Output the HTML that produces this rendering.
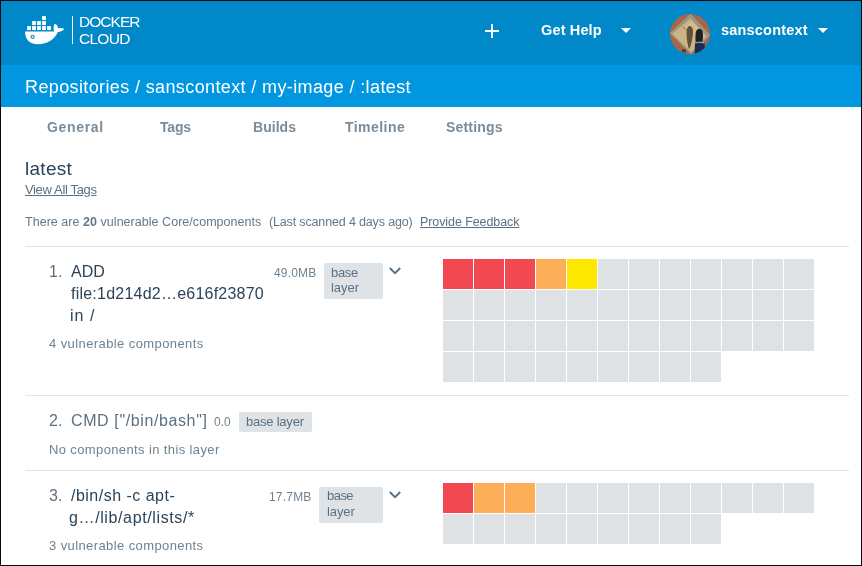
<!DOCTYPE html>
<html><head><meta charset="utf-8">
<style>
html,body{margin:0;padding:0;}
body{width:862px;height:566px;overflow:hidden;position:relative;background:#fff;font-family:"Liberation Sans",sans-serif;}
.frame{position:absolute;left:0;top:0;width:862px;height:566px;box-sizing:border-box;border:1px solid #0a0a0a;pointer-events:none;z-index:10;}
.hdr{position:absolute;left:0;top:0;width:862px;height:65px;background:#0088c8;}
.hdrline{position:absolute;left:0;top:64px;width:862px;height:1px;background:#0082c0;}
.crumb{position:absolute;left:0;top:65px;width:862px;height:42px;background:#0096e0;}
.t{position:absolute;white-space:nowrap;will-change:transform;}
.t b{font-weight:700;}
.hr{position:absolute;left:25px;width:824px;height:1px;background:#e1e3e5;}
.c{position:absolute;width:30px;height:30px;}
.badge{position:absolute;background:#dfe3e6;border-radius:2px;}
svg{position:absolute;left:0;top:0;}
</style></head><body>
<div class="hdr"></div>

<div class="crumb"></div>
<svg width="862" height="566" viewBox="0 0 862 566">
  <defs><clipPath id="av"><circle cx="690" cy="34" r="20"/></clipPath></defs>
  <!-- whale containers -->
  <g fill="#fff">
    <rect x="27.1" y="26.1" width="3.8" height="4"/>
    <rect x="32.1" y="26.1" width="3.8" height="4"/>
    <rect x="37.1" y="26.1" width="3.8" height="4"/>
    <rect x="42.1" y="26.1" width="3.8" height="4"/>
    <rect x="47.1" y="26.1" width="3.8" height="4"/>
    <rect x="32.1" y="21.1" width="3.8" height="4"/>
    <rect x="37.1" y="21.1" width="3.8" height="4"/>
    <rect x="42.1" y="21.1" width="3.8" height="4"/>
    <rect x="42.1" y="16.1" width="3.8" height="4"/>
    <path d="M25,31.5 L54.2,31.5 C53.3,28.8 53.5,25 55,23.8 C56.8,24.3 58,26.5 58.2,28.6 C60.2,27.8 62.6,28 64.3,28.9 C62.9,30.7 60.5,31.6 57.9,31.9 C55,38.8 47.5,44.2 38,44.2 C29,44.2 25.1,39 25,31.5 Z"/>
  </g>
  <circle cx="32.6" cy="36.8" r="1.6" fill="none" stroke="#0088c8" stroke-width="1.1"/>
  <rect x="72" y="16" width="1" height="28" fill="#fff"/>
  <!-- plus -->
  <rect x="485" y="30" width="14" height="2" fill="#fff"/>
  <rect x="491" y="24" width="2" height="14" fill="#fff"/>
  <!-- carets -->
  <path d="M621,28 L631,28 L626,33 Z" fill="#fff"/>
  <path d="M818,28 L828,28 L823,33 Z" fill="#fff"/>
  <!-- avatar -->
  <filter id="blur" x="-10%" y="-10%" width="120%" height="120%"><feGaussianBlur stdDeviation="1"/></filter>
  <g clip-path="url(#av)"><g>
    <rect x="666" y="10" width="48" height="48" fill="#a3674c"/>
    <path d="M690.5,13.6 L710.5,35.2 L691,54.5 L669.6,33 Z" fill="#9d9484"/>
    <path d="M690.5,18.6 L706.7,36.6 L691.2,52.2 L672.1,33.8 Z" fill="#cfb483"/>
    <path d="M692,21 L705,35.5 L698,42 L686,27 Z" fill="#d8c08f" opacity="0.7"/>
    <path d="M682.4,26.4 L686.3,29.9" stroke="#6a5d50" stroke-width="0.7"/>
    <path d="M689.8,26 C692.3,26.3 693.3,29.5 693,33 C692.6,38 691.5,44 689.2,49.3 C687.6,45 686.5,38 686.6,32 C686.7,28.5 688,26 689.8,26 Z" fill="#5f5040"/>
    <path d="M699.3,28.8 C702.2,28.8 703.2,32 703,36 C702.9,39 702.6,41.5 702,43 L695.8,43 C695.3,40 695.3,35 695.8,32.3 C696.3,30.3 697.6,28.8 699.3,28.8 Z" fill="#1f2023"/>
    <path d="M695,42.8 C698,41.6 701.5,41.6 704.6,43 L705.5,56 L694.5,56 Z" fill="#1e2b55"/>
    <path d="M695.4,43 C698,41.9 701.5,41.9 704.3,43.2" stroke="#b8c0d0" stroke-width="1" fill="none"/>
    <path d="M682,49 L686,49.5 L686,52.5 L682,52 Z" fill="#4a4036"/>
  </g></g>
  <!-- chevrons -->
  <path d="M389.8,268 L395,273.2 L400.2,268" fill="none" stroke="#587083" stroke-width="1.9"/>
  <path d="M389.8,492 L395,497.2 L400.2,492" fill="none" stroke="#587083" stroke-width="1.9"/>
</svg>
<div class="hr" style="top:246px"></div>
<div class="hr" style="top:395px"></div>
<div class="hr" style="top:470px"></div>
<div class="badge" style="left:324px;top:263px;width:59px;height:36px"></div>
<div class="badge" style="left:239px;top:412px;width:73px;height:20px"></div>
<div class="badge" style="left:319px;top:487px;width:64px;height:36px"></div>
<div class="c" style="left:443px;top:259px;background:#f24852"></div>
<div class="c" style="left:474px;top:259px;background:#f24852"></div>
<div class="c" style="left:505px;top:259px;background:#f24852"></div>
<div class="c" style="left:536px;top:259px;background:#fdae58"></div>
<div class="c" style="left:567px;top:259px;background:#ffe800"></div>
<div class="c" style="left:598px;top:259px;background:#dfe2e5"></div>
<div class="c" style="left:629px;top:259px;background:#dfe2e5"></div>
<div class="c" style="left:660px;top:259px;background:#dfe2e5"></div>
<div class="c" style="left:691px;top:259px;background:#dfe2e5"></div>
<div class="c" style="left:722px;top:259px;background:#dfe2e5"></div>
<div class="c" style="left:753px;top:259px;background:#dfe2e5"></div>
<div class="c" style="left:784px;top:259px;background:#dfe2e5"></div>
<div class="c" style="left:443px;top:290px;background:#dfe2e5"></div>
<div class="c" style="left:474px;top:290px;background:#dfe2e5"></div>
<div class="c" style="left:505px;top:290px;background:#dfe2e5"></div>
<div class="c" style="left:536px;top:290px;background:#dfe2e5"></div>
<div class="c" style="left:567px;top:290px;background:#dfe2e5"></div>
<div class="c" style="left:598px;top:290px;background:#dfe2e5"></div>
<div class="c" style="left:629px;top:290px;background:#dfe2e5"></div>
<div class="c" style="left:660px;top:290px;background:#dfe2e5"></div>
<div class="c" style="left:691px;top:290px;background:#dfe2e5"></div>
<div class="c" style="left:722px;top:290px;background:#dfe2e5"></div>
<div class="c" style="left:753px;top:290px;background:#dfe2e5"></div>
<div class="c" style="left:784px;top:290px;background:#dfe2e5"></div>
<div class="c" style="left:443px;top:321px;background:#dfe2e5"></div>
<div class="c" style="left:474px;top:321px;background:#dfe2e5"></div>
<div class="c" style="left:505px;top:321px;background:#dfe2e5"></div>
<div class="c" style="left:536px;top:321px;background:#dfe2e5"></div>
<div class="c" style="left:567px;top:321px;background:#dfe2e5"></div>
<div class="c" style="left:598px;top:321px;background:#dfe2e5"></div>
<div class="c" style="left:629px;top:321px;background:#dfe2e5"></div>
<div class="c" style="left:660px;top:321px;background:#dfe2e5"></div>
<div class="c" style="left:691px;top:321px;background:#dfe2e5"></div>
<div class="c" style="left:722px;top:321px;background:#dfe2e5"></div>
<div class="c" style="left:753px;top:321px;background:#dfe2e5"></div>
<div class="c" style="left:784px;top:321px;background:#dfe2e5"></div>
<div class="c" style="left:443px;top:352px;background:#dfe2e5"></div>
<div class="c" style="left:474px;top:352px;background:#dfe2e5"></div>
<div class="c" style="left:505px;top:352px;background:#dfe2e5"></div>
<div class="c" style="left:536px;top:352px;background:#dfe2e5"></div>
<div class="c" style="left:567px;top:352px;background:#dfe2e5"></div>
<div class="c" style="left:598px;top:352px;background:#dfe2e5"></div>
<div class="c" style="left:629px;top:352px;background:#dfe2e5"></div>
<div class="c" style="left:660px;top:352px;background:#dfe2e5"></div>
<div class="c" style="left:691px;top:352px;background:#dfe2e5"></div>
<div class="c" style="left:443px;top:483px;background:#f24852"></div>
<div class="c" style="left:474px;top:483px;background:#fdae58"></div>
<div class="c" style="left:505px;top:483px;background:#fdae58"></div>
<div class="c" style="left:536px;top:483px;background:#dfe2e5"></div>
<div class="c" style="left:567px;top:483px;background:#dfe2e5"></div>
<div class="c" style="left:598px;top:483px;background:#dfe2e5"></div>
<div class="c" style="left:629px;top:483px;background:#dfe2e5"></div>
<div class="c" style="left:660px;top:483px;background:#dfe2e5"></div>
<div class="c" style="left:691px;top:483px;background:#dfe2e5"></div>
<div class="c" style="left:722px;top:483px;background:#dfe2e5"></div>
<div class="c" style="left:753px;top:483px;background:#dfe2e5"></div>
<div class="c" style="left:784px;top:483px;background:#dfe2e5"></div>
<div class="c" style="left:443px;top:514px;background:#dfe2e5"></div>
<div class="c" style="left:474px;top:514px;background:#dfe2e5"></div>
<div class="c" style="left:505px;top:514px;background:#dfe2e5"></div>
<div class="c" style="left:536px;top:514px;background:#dfe2e5"></div>
<div class="c" style="left:567px;top:514px;background:#dfe2e5"></div>
<div class="c" style="left:598px;top:514px;background:#dfe2e5"></div>
<div class="c" style="left:629px;top:514px;background:#dfe2e5"></div>
<div class="c" style="left:660px;top:514px;background:#dfe2e5"></div>
<div class="c" style="left:691px;top:514px;background:#dfe2e5"></div>
<div class="t" id="t0" style="left:79.20px;top:13px;font-size:15.5px;line-height:18.60px;color:#ffffff;font-weight:400;letter-spacing:-0.960px;">DOCKER</div>
<div class="t" id="t1" style="left:79.20px;top:30px;font-size:15.5px;line-height:18.60px;color:#ffffff;font-weight:400;letter-spacing:-0.725px;">CLOUD</div>
<div class="t" id="t2" style="left:541.00px;top:22px;font-size:14.5px;line-height:17.40px;color:#ffffff;font-weight:700;letter-spacing:0.143px;">Get Help</div>
<div class="t" id="t3" style="left:721.00px;top:22px;font-size:14.5px;line-height:17.40px;color:#ffffff;font-weight:700;letter-spacing:0.200px;">sanscontext</div>
<div class="t" id="t4" style="left:25.00px;top:77px;font-size:18px;line-height:21.60px;color:#ffffff;font-weight:400;letter-spacing:0.378px;">Repositories / sanscontext / my-image / :latest</div>
<div class="t" id="t5" style="left:47.00px;top:119px;font-size:14px;line-height:16.80px;color:#7a8c99;font-weight:700;letter-spacing:0.667px;">General</div>
<div class="t" id="t6" style="left:159.50px;top:119px;font-size:14px;line-height:16.80px;color:#7a8c99;font-weight:700;letter-spacing:-0.200px;">Tags</div>
<div class="t" id="t7" style="left:253.40px;top:119px;font-size:14px;line-height:16.80px;color:#7a8c99;font-weight:700;letter-spacing:0.040px;">Builds</div>
<div class="t" id="t8" style="left:345.40px;top:119px;font-size:14px;line-height:16.80px;color:#7a8c99;font-weight:700;letter-spacing:0.457px;">Timeline</div>
<div class="t" id="t9" style="left:446.00px;top:119px;font-size:14px;line-height:16.80px;color:#7a8c99;font-weight:700;letter-spacing:0.171px;">Settings</div>
<div class="t" id="t10" style="left:24.80px;top:158px;font-size:19px;line-height:22.80px;color:#2c4459;font-weight:400;letter-spacing:0.280px;">latest</div>
<div class="t" id="t11" style="left:25.00px;top:182px;font-size:13px;line-height:15.60px;color:#5b7083;font-weight:400;letter-spacing:-0.350px;text-decoration:underline;">View All Tags</div>
<div class="t" id="t12" style="left:25.00px;top:215px;font-size:12.5px;line-height:15.00px;color:#63788a;font-weight:400;letter-spacing:0.037px;">There are <b>20</b> vulnerable Core/components</div>
<div class="t" id="t13" style="left:269.00px;top:215px;font-size:12.5px;line-height:15.00px;color:#63788a;font-weight:400;letter-spacing:-0.150px;">(Last scanned 4 days ago)</div>
<div class="t" id="t14" style="left:420.40px;top:215px;font-size:12.5px;line-height:15.00px;color:#5b7083;font-weight:400;letter-spacing:-0.087px;text-decoration:underline;">Provide Feedback</div>
<div class="t" id="t15" style="left:49.30px;top:262px;font-size:16px;line-height:19.20px;color:#5b7083;font-weight:400;letter-spacing:0.000px;">1.</div>
<div class="t" id="t16" style="left:71.00px;top:262px;font-size:16px;line-height:19.20px;color:#2c4459;font-weight:400;letter-spacing:0.000px;">ADD</div>
<div class="t" id="t17" style="left:71.00px;top:284px;font-size:16px;line-height:19.20px;color:#2c4459;font-weight:400;letter-spacing:0.227px;">file:1d214d2…e616f23870</div>
<div class="t" id="t18" style="left:70.40px;top:306px;font-size:16px;line-height:19.20px;color:#2c4459;font-weight:400;letter-spacing:1.000px;">in /</div>
<div class="t" id="t19" style="left:273.60px;top:266px;font-size:12px;line-height:14.40px;color:#6f8290;font-weight:400;letter-spacing:0.160px;">49.0MB</div>
<div class="t" id="t20" style="left:331.00px;top:265px;font-size:13px;line-height:15.60px;color:#5b7083;font-weight:400;letter-spacing:-0.333px;">base</div>
<div class="t" id="t21" style="left:331.00px;top:280px;font-size:13px;line-height:15.60px;color:#5b7083;font-weight:400;letter-spacing:-0.050px;">layer</div>
<div class="t" id="t22" style="left:49.00px;top:336px;font-size:13px;line-height:15.60px;color:#6f8290;font-weight:400;letter-spacing:0.409px;">4 vulnerable components</div>
<div class="t" id="t23" style="left:49.00px;top:411px;font-size:16px;line-height:19.20px;color:#5b7083;font-weight:400;letter-spacing:0.000px;">2.</div>
<div class="t" id="t24" style="left:70.60px;top:411px;font-size:16px;line-height:19.20px;color:#5b7083;font-weight:400;letter-spacing:0.612px;">CMD ["/bin/bash"]</div>
<div class="t" id="t25" style="left:214.00px;top:415px;font-size:12px;line-height:14.40px;color:#6f8290;font-weight:400;letter-spacing:0.000px;">0.0</div>
<div class="t" id="t26" style="left:246.00px;top:414px;font-size:13px;line-height:15.60px;color:#5b7083;font-weight:400;letter-spacing:-0.222px;">base layer</div>
<div class="t" id="t27" style="left:48.50px;top:442px;font-size:13px;line-height:15.60px;color:#6f8290;font-weight:400;letter-spacing:0.377px;">No components in this layer</div>
<div class="t" id="t28" style="left:48.80px;top:486px;font-size:16px;line-height:19.20px;color:#5b7083;font-weight:400;letter-spacing:0.000px;">3.</div>
<div class="t" id="t29" style="left:71.10px;top:486px;font-size:16px;line-height:19.20px;color:#2c4459;font-weight:400;letter-spacing:0.486px;">/bin/sh -c apt-</div>
<div class="t" id="t30" style="left:69.40px;top:508px;font-size:16px;line-height:19.20px;color:#2c4459;font-weight:400;letter-spacing:0.618px;">g…/lib/apt/lists/*</div>
<div class="t" id="t31" style="left:268.60px;top:490px;font-size:12px;line-height:14.40px;color:#6f8290;font-weight:400;letter-spacing:0.200px;">17.7MB</div>
<div class="t" id="t32" style="left:327.30px;top:488px;font-size:13px;line-height:15.60px;color:#5b7083;font-weight:400;letter-spacing:-0.533px;">base</div>
<div class="t" id="t33" style="left:327.30px;top:504px;font-size:13px;line-height:15.60px;color:#5b7083;font-weight:400;letter-spacing:-0.100px;">layer</div>
<div class="t" id="t34" style="left:48.70px;top:538px;font-size:13px;line-height:15.60px;color:#6f8290;font-weight:400;letter-spacing:0.400px;">3 vulnerable components</div>
<div class="frame"></div>
</body></html>
